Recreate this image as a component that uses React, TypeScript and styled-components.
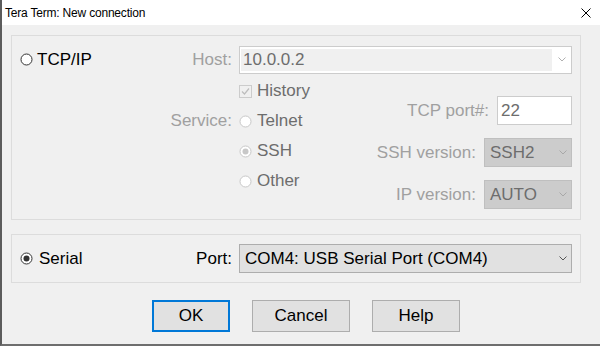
import styled, { createGlobalStyle } from "styled-components"

const Global = createGlobalStyle`
    body {
        margin: 0;
        background: #ffffff;
    }
`

const Window = styled.div`
    width: 600px;
    height: 346px;
    box-sizing: border-box;
    border-left: 2px solid #5c5c5c;
    border-bottom: 2px solid #6e6e6e;
    background: #f0f0f0;
    display: flex;
    flex-direction: column;
    font-family: "Liberation Sans", Arial, sans-serif;
    overflow: hidden;
`

const TitleBar = styled.div`
    height: 25px;
    flex: none;
    background: #ffffff;
    display: flex;
    align-items: center;
    justify-content: space-between;
    padding: 0 9px 0 3px;
    font-size: 12px;
    letter-spacing: -0.2px;
    color: #000;
`

const Body = styled.div`
    display: flex;
    flex-direction: column;
    padding: 10px 19px 0 9px;
    font-size: 17px;
`

const GroupBox = styled.div<{ $pb: number; $mt?: number }>`
    border: 1px solid #dcdcdc;
    padding: 9px 8px ${p => p.$pb}px 8px;
    margin-top: ${p => p.$mt ?? 0}px;
    display: flex;
    flex-direction: column;
`

const LabelRow = styled.div`
    display: grid;
    grid-template-columns: 212px 1fr;
    column-gap: 7px;
    align-items: center;
    height: 29px;
`

const LeftCell = styled.div`
    display: flex;
    align-items: center;
    justify-content: space-between;
`

const Label = styled.span<{ $dim?: boolean }>`
    color: ${p => (p.$dim ? "#a0a0a0" : "#000")};
    white-space: nowrap;
    text-align: right;
`

const Choice = styled.label<{ $dim?: boolean; $gap?: number }>`
    display: inline-flex;
    align-items: center;
    gap: ${p => p.$gap ?? 5}px;
    color: ${p => (p.$dim ? "#6d6d6d" : "#000")};
    white-space: nowrap;
`

const DetailRow = styled.div`
    display: flex;
    justify-content: space-between;
    align-items: flex-start;
`

const ServiceGrid = styled.div`
    display: grid;
    grid-template-columns: 212px auto;
    column-gap: 7px;
    grid-auto-rows: 30px;
    align-items: center;
    padding-top: 2px;
`

const RightFields = styled.div`
    display: flex;
    flex-direction: column;
    align-items: flex-end;
    gap: 13px;
    padding-top: 22px;
`

const FieldRow = styled.div`
    display: flex;
    align-items: center;
    gap: 8px;
`

const HostCombo = styled.div`
    height: 28px;
    box-sizing: border-box;
    border: 1px solid #cccccc;
    background: #ffffff;
    padding: 2px 0 2px 1px;
    display: flex;
`

const HostField = styled.div`
    flex: 1;
    background: #f0f0f0;
    color: #6d6d6d;
    display: flex;
    align-items: center;
    padding-left: 2px;
`

const ArrowBox = styled.div`
    width: 19px;
    display: flex;
    align-items: center;
    justify-content: center;
`

const TextBox = styled.div`
    width: 75px;
    height: 29px;
    box-sizing: border-box;
    border: 1px solid #cccccc;
    background: #ffffff;
    color: #6d6d6d;
    padding: 1px 0 0 3px;
    display: flex;
    align-items: center;
`

const Select = styled.div<{ $disabled?: boolean; $width?: number }>`
    width: ${p => (p.$width ? `${p.$width}px` : "auto")};
    height: 29px;
    box-sizing: border-box;
    border: 1px solid ${p => (p.$disabled ? "#bfbfbf" : "#adadad")};
    background: ${p => (p.$disabled ? "#cccccc" : "#e1e1e1")};
    color: ${p => (p.$disabled ? "#6d6d6d" : "#000")};
    padding: 0 4px 0 5px;
    display: flex;
    align-items: center;
    justify-content: space-between;
`

const ButtonRow = styled.div`
    display: flex;
    gap: 22px;
    margin-top: 17px;
    padding-left: 141px;
`

const Button = styled.button<{ $w: number; $default?: boolean }>`
    width: ${p => p.$w}px;
    height: 32px;
    box-sizing: border-box;
    border: ${p => (p.$default ? "2px solid #0078d7" : "1px solid #adadad")};
    background: #e1e1e1;
    font-family: inherit;
    font-size: 17px;
    color: #000;
    padding: 0;
`

const Radio = ({ checked, dim }: { checked?: boolean; dim?: boolean }) => (
    <svg width="13" height="13" viewBox="0 0 13 13">
        <circle cx="6.5" cy="6.5" r="5.5" fill="#fff" stroke={dim ? "#c8c8c8" : "#333"} strokeWidth="1" />
        {checked && <circle cx="6.5" cy="6.5" r="3" fill={dim ? "#c8c8c8" : "#333"} />}
    </svg>
)

const Check = () => (
    <svg width="13" height="13" viewBox="0 0 13 13">
        <rect x="0.5" y="0.5" width="12" height="12" fill="none" stroke="#cccccc" />
        <polyline points="3,6.5 5.5,9 10,3.5" fill="none" stroke="#bdbdbd" strokeWidth="1.2" />
    </svg>
)

const Chevron = ({ color }: { color: string }) => (
    <svg width="8" height="5" viewBox="0 0 8 5">
        <polyline points="0.5,0.5 4,4 7.5,0.5" fill="none" stroke={color} strokeWidth="1" />
    </svg>
)

export default function App() {
    return (
        <>
            <Global />
            <Window>
                <TitleBar>
                    <span>Tera Term: New connection</span>
                    <svg width="10" height="10" viewBox="0 0 10 10">
                        <path d="M0.5 0.5 L9.5 9.5 M9.5 0.5 L0.5 9.5" stroke="#000" strokeWidth="1" />
                    </svg>
                </TitleBar>
                <Body>
                    <GroupBox $pb={10}>
                        <LabelRow>
                            <LeftCell>
                                <Choice $gap={4}>
                                    <Radio />
                                    TCP/IP
                                </Choice>
                                <Label $dim>Host:</Label>
                            </LeftCell>
                            <HostCombo>
                                <HostField>10.0.0.2</HostField>
                                <ArrowBox>
                                    <Chevron color="#b0b0b0" />
                                </ArrowBox>
                            </HostCombo>
                        </LabelRow>
                        <DetailRow>
                            <ServiceGrid>
                                <span />
                                <Choice $dim>
                                    <Check />
                                    History
                                </Choice>
                                <Label $dim>Service:</Label>
                                <Choice $dim>
                                    <Radio dim />
                                    Telnet
                                </Choice>
                                <span />
                                <Choice $dim>
                                    <Radio dim checked />
                                    SSH
                                </Choice>
                                <span />
                                <Choice $dim>
                                    <Radio dim />
                                    Other
                                </Choice>
                            </ServiceGrid>
                            <RightFields>
                                <FieldRow>
                                    <Label $dim>TCP port#:</Label>
                                    <TextBox>22</TextBox>
                                </FieldRow>
                                <FieldRow>
                                    <Label $dim>SSH version:</Label>
                                    <Select $disabled $width={88}>
                                        SSH2
                                        <Chevron color="#a8a8a8" />
                                    </Select>
                                </FieldRow>
                                <FieldRow>
                                    <Label $dim>IP version:</Label>
                                    <Select $disabled $width={88}>
                                        AUTO
                                        <Chevron color="#a8a8a8" />
                                    </Select>
                                </FieldRow>
                            </RightFields>
                        </DetailRow>
                    </GroupBox>
                    <GroupBox $pb={9} $mt={14}>
                        <LabelRow>
                            <LeftCell>
                                <Choice $gap={6}>
                                    <Radio checked />
                                    Serial
                                </Choice>
                                <Label>Port:</Label>
                            </LeftCell>
                            <Select>
                                COM4: USB Serial Port (COM4)
                                <Chevron color="#555" />
                            </Select>
                        </LabelRow>
                    </GroupBox>
                    <ButtonRow>
                        <Button $w={78} $default>OK</Button>
                        <Button $w={98}>Cancel</Button>
                        <Button $w={88}>Help</Button>
                    </ButtonRow>
                </Body>
            </Window>
        </>
    )
}
